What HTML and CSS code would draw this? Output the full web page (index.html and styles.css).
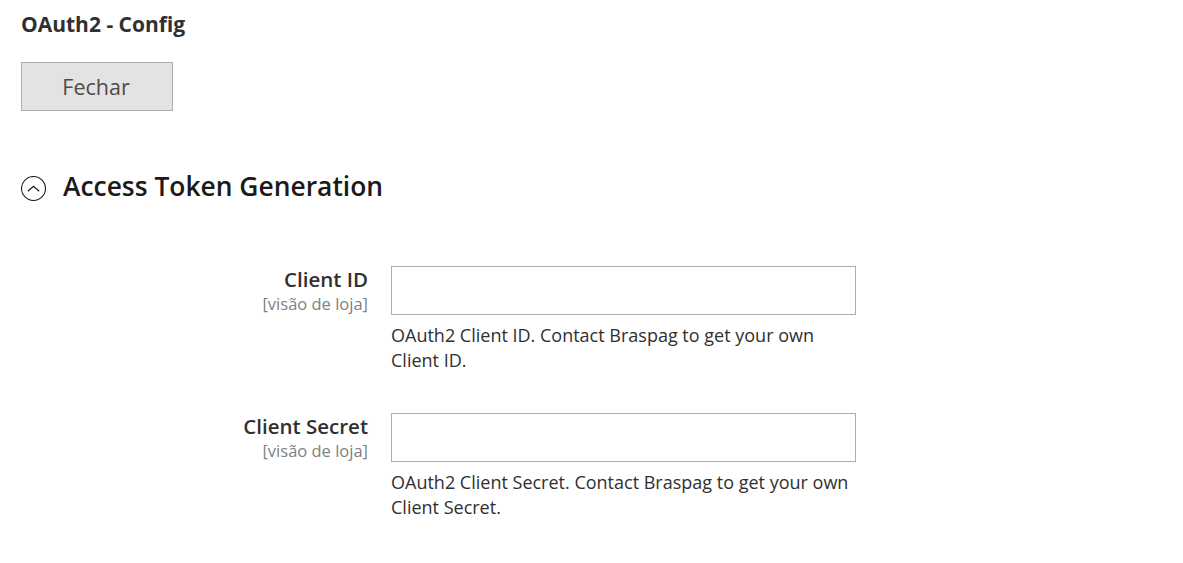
FILE: index.html
```html
<!DOCTYPE html>
<html lang="pt-BR">
<head>
<meta charset="utf-8">
<title>OAuth2 - Config</title>
<link rel="stylesheet" href="styles.css">
</head>
<body>
<div class="page">
  <h1 class="page-title">OAuth2 - Config</h1>
  <div class="actions">
    <button class="btn" type="button">Fechar</button>
  </div>
  <section class="section">
    <h2 class="section-title">
      <span class="toggle">
        <svg width="26" height="26" viewBox="0 0 26 26" aria-hidden="true">
          <circle cx="12.5" cy="12.5" r="12" fill="none" stroke="#1a1a1a" stroke-width="1.1"/>
          <path d="M6.8 15.2 L12.5 10.2 L18.2 15.2" fill="none" stroke="#1a1a1a" stroke-width="1.2"/>
        </svg>
      </span>
      <span class="section-text">Access Token Generation</span>
    </h2>
    <div class="fields">
      <div class="field">
        <div class="label">
          <span class="label-text">Client ID</span>
          <span class="scope">[visão de loja]</span>
        </div>
        <div class="control">
          <input class="input" type="text">
          <p class="note">OAuth2 Client ID. Contact Braspag to get your own Client ID.</p>
        </div>
      </div>
      <div class="field">
        <div class="label">
          <span class="label-text">Client Secret</span>
          <span class="scope">[visão de loja]</span>
        </div>
        <div class="control">
          <input class="input" type="text">
          <p class="note">OAuth2 Client Secret. Contact Braspag to get your own Client Secret.</p>
        </div>
      </div>
    </div>
  </section>
</div>
</body>
</html>
```

FILE: styles.css
```css
html, body {
  margin: 0;
  padding: 0;
  background: #ffffff;
}
body {
  font-family: "Open Sans", "Noto Sans", sans-serif;
  color: #303030;
}
.page {
  padding: 10px 21px 0 21px;
}
.page-title {
  margin: 0;
  font-size: 21px;
  line-height: 28px;
  font-weight: 700;
  color: #303030;
}
.actions {
  margin-top: 24px;
}
.btn {
  width: 152px;
  height: 49px;
  background: #e3e3e3;
  border: 1px solid #adadad;
  color: #514943;
  font-family: "Open Sans", sans-serif;
  font-size: 21.5px;
  font-weight: 400;
  padding: 0 2px 0 0;
  cursor: pointer;
}
.section {
  margin-top: 58px;
}
.section-title {
  margin: 0;
  display: flex;
  align-items: center;
  gap: 16px;
  font-size: 26.4px;
  line-height: 34px;
  font-weight: 600;
  color: #1a1a1a;
}
.toggle {
  display: flex;
  width: 26px;
  height: 26px;
  margin-top: 5px;
}
.fields {
  margin-top: 63px;
  display: flex;
  flex-direction: column;
  gap: 40px;
}
.field {
  display: flex;
  gap: 23px;
}
.label {
  width: 347px;
  display: flex;
  flex-direction: column;
  align-items: flex-end;
  padding-top: 0;
}
.label-text {
  display: block;
  font-size: 20.5px;
  line-height: 27px;
  font-weight: 600;
  color: #303030;
}
.scope {
  display: block;
  font-size: 16.5px;
  line-height: 20px;
  margin-top: 1px;
  color: #808080;
}
.control {
  width: 465px;
}
.input {
  display: block;
  box-sizing: border-box;
  width: 465px;
  height: 49px;
  margin: 0;
  border: 1px solid #adadad;
  background: #fff;
}
.note {
  margin: 8px 0 0 0;
  font-size: 18px;
  line-height: 25px;
  color: #303030;
}
```
